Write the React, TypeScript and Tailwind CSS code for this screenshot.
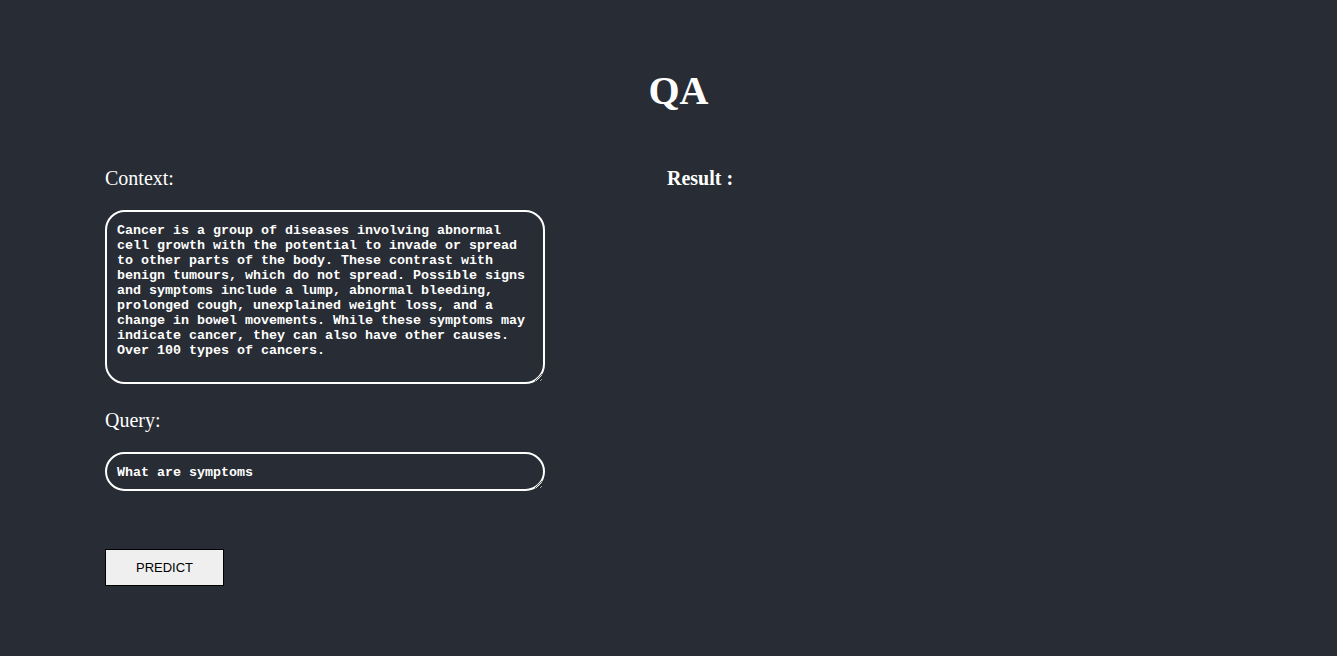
import React, { useState } from "react";

const CONTEXT =
  "Cancer is a group of diseases involving abnormal cell growth with the potential to invade or spread to other parts of the body. These contrast with benign tumours, which do not spread. Possible signs and symptoms include a lump, abnormal bleeding, prolonged cough, unexplained weight loss, and a change in bowel movements. While these symptoms may indicate cancer, they can also have other causes. Over 100 types of cancers.";

export default function App() {
  const [context, setContext] = useState(CONTEXT);
  const [query, setQuery] = useState("What are symptoms");

  return (
    <div className="min-h-[656px] bg-[#282c34] text-white font-['Liberation_Serif',serif]">
      {/* Title */}
      <h1 className="pt-[68px] pl-[20px] text-center text-[40px] leading-[46px] font-bold">QA</h1>

      <div className="flex pt-[53px]">
        {/* Left: inputs */}
        <div className="w-[667px] pl-[105px]">
          <p className="text-[20px] leading-[23px]">Context:</p>
          <textarea
            className="mt-[20px] block w-[440px] h-[174px] rounded-[20px] border-2 border-white bg-transparent px-[10px] pt-[11px] pb-[9px] text-[13.33px] leading-[15px] font-bold text-white font-['Liberation_Mono',monospace] outline-none"
            value={context}
            onChange={(e) => setContext(e.target.value)}
          />

          <p className="mt-[25px] text-[20px] leading-[23px]">Query:</p>
          <textarea
            className="mt-[20px] block w-[440px] h-[39px] rounded-[20px] border-2 border-white bg-transparent px-[10px] pt-[11px] pb-[8px] text-[13.33px] leading-[15px] font-bold text-white font-['Liberation_Mono',monospace] outline-none"
            rows={1}
            value={query}
            onChange={(e) => setQuery(e.target.value)}
          />

          <button
            type="button"
            className="mt-[58px] block w-[119px] h-[37px] border border-black bg-[#efefef] text-[13px] text-black font-['Liberation_Sans',sans-serif]"
          >
            PREDICT
          </button>
        </div>

        {/* Right: result */}
        <div className="flex-1">
          <p className="text-[20px] leading-[23px] font-bold">Result :</p>
        </div>
      </div>
    </div>
  );
}
